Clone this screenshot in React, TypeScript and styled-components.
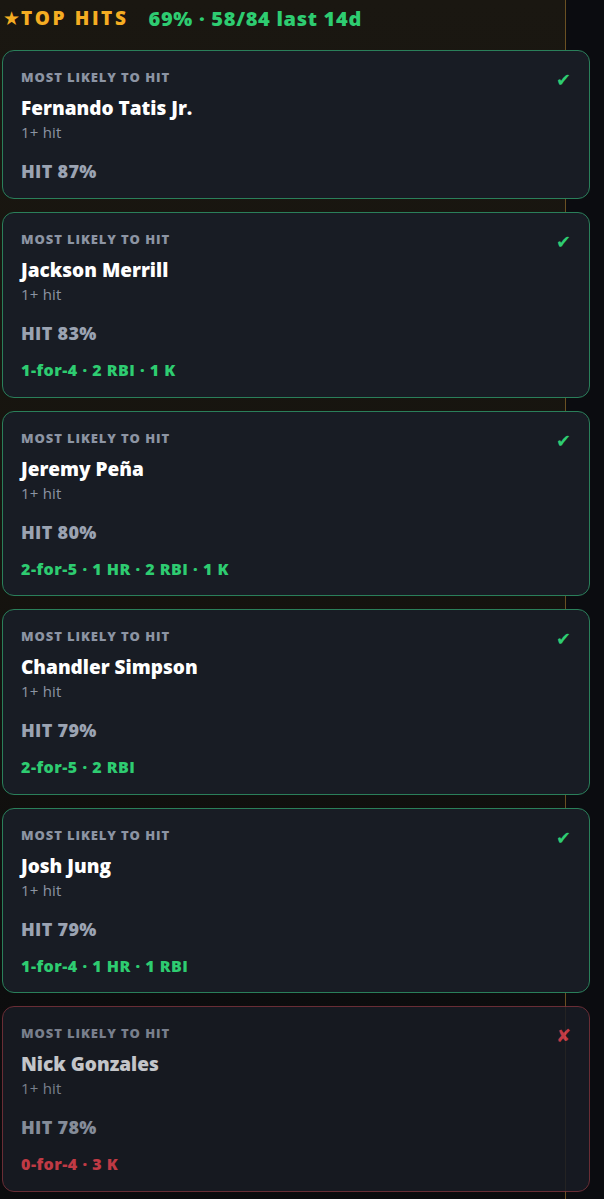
import * as React from "react";
import styled, { createGlobalStyle } from "styled-components";

type Pick = {
  name: string;
  hit: number;
  line?: string;
  result: "win" | "loss";
};

const picks: Pick[] = [
  { name: "Fernando Tatis Jr.", hit: 87, result: "win" },
  { name: "Jackson Merrill", hit: 83, line: "1-for-4 · 2 RBI · 1 K", result: "win" },
  { name: "Jeremy Peña", hit: 80, line: "2-for-5 · 1 HR · 2 RBI · 1 K", result: "win" },
  { name: "Chandler Simpson", hit: 79, line: "2-for-5 · 2 RBI", result: "win" },
  { name: "Josh Jung", hit: 79, line: "1-for-4 · 1 HR · 1 RBI", result: "win" },
  { name: "Nick Gonzales", hit: 78, line: "0-for-4 · 3 K", result: "loss" },
];

const GlobalStyle = createGlobalStyle`
  html, body {
    margin: 0;
    padding: 0;
    background: #0b0c10;
  }
  body {
    font-family: "Open Sans", Roboto, sans-serif;
    -webkit-font-smoothing: antialiased;
  }
`;

export default function App() {
  return (
    <>
      <GlobalStyle />
      <Page>
        <Panel>
          <Header>
            <Title>
              <Star>★</Star>TOP HITS
            </Title>
            <Record>69% · 58/84 last 14d</Record>
          </Header>
          <List>
            {picks.map((p) => (
              <Card key={p.name} $loss={p.result === "loss"}>
                <Mark $loss={p.result === "loss"}>
                  {p.result === "loss" ? "✘" : "✔"}
                </Mark>
                <Label>Most likely to hit</Label>
                <Name $loss={p.result === "loss"}>{p.name}</Name>
                <Market>1+ hit</Market>
                <Prob>HIT {p.hit}%</Prob>
                {p.line && <Line $loss={p.result === "loss"}>{p.line}</Line>}
              </Card>
            ))}
          </List>
        </Panel>
      </Page>
    </>
  );
}

const Page = styled.div`
  width: 604px;
  min-height: 1199px;
  background: #0b0c10;
  overflow: hidden;
`;

const Panel = styled.div`
  width: 565px;
  min-height: 1199px;
  border-right: 1px solid #6a5022;
  background: linear-gradient(180deg, #1a1711 0%, #16140f 45%, #0d0d0e 82%, #0b0b0d 100%);
`;

const Header = styled.div`
  display: flex;
  align-items: center;
  gap: 20px;
  height: 36px;
  padding: 0 0 0 3px;
  font-weight: 800;
`;

const Title = styled.div`
  display: flex;
  align-items: center;
  color: #f5ad22;
  font-size: 19px;
  letter-spacing: 2.6px;
`;

const Star = styled.span`
  font-family: "DejaVu Sans", sans-serif;
  font-size: 19px;
  letter-spacing: 0;
  margin-right: 1px;
`;

const Record = styled.div`
  color: #2ecc71;
  font-size: 20px;
  letter-spacing: 0.7px;
`;

const List = styled.div`
  display: flex;
  flex-direction: column;
  gap: 13px;
  padding: 14px 0 10px 2px;
`;

const Card = styled.div<{ $loss: boolean }>`
  position: relative;
  width: 588px;
  box-sizing: border-box;
  border-radius: 12px;
  border: 1.5px solid ${(p) => (p.$loss ? "#7a333c" : "#2a7f5a")};
  background: #181c24;
  padding: 17px 18px 14px;
  display: flex;
  flex-direction: column;
  opacity: ${(p) => (p.$loss ? 0.85 : 1)};
`;

const Mark = styled.span<{ $loss: boolean }>`
  position: absolute;
  top: 18px;
  right: 18px;
  font-family: "DejaVu Sans", sans-serif;
  font-size: 18px;
  color: ${(p) => (p.$loss ? "#e0434f" : "#2ecc71")};
`;

const Label = styled.div`
  font-size: 13px;
  font-weight: 800;
  text-transform: uppercase;
  letter-spacing: 0.9px;
  color: #8c94a3;
  line-height: 18px;
`;

const Name = styled.div<{ $loss: boolean }>`
  margin-top: 10px;
  font-size: 19px;
  font-weight: 800;
  color: ${(p) => (p.$loss ? "#e4e6ea" : "#ffffff")};
  line-height: 24px;
`;

const Market = styled.div`
  margin-top: 1px;
  font-size: 15px;
  font-weight: 500;
  letter-spacing: 0.2px;
  color: #8c94a3;
  line-height: 22px;
`;

const Prob = styled.div`
  margin-top: 15px;
  font-size: 18px;
  font-weight: 800;
  letter-spacing: 0.3px;
  color: #9ba3b2;
  line-height: 26px;
`;

const Line = styled.div<{ $loss: boolean }>`
  margin-top: 12px;
  font-size: 16px;
  font-weight: 800;
  letter-spacing: 0.5px;
  color: ${(p) => (p.$loss ? "#e0434f" : "#2ecc71")};
  line-height: 24.5px;
`;
